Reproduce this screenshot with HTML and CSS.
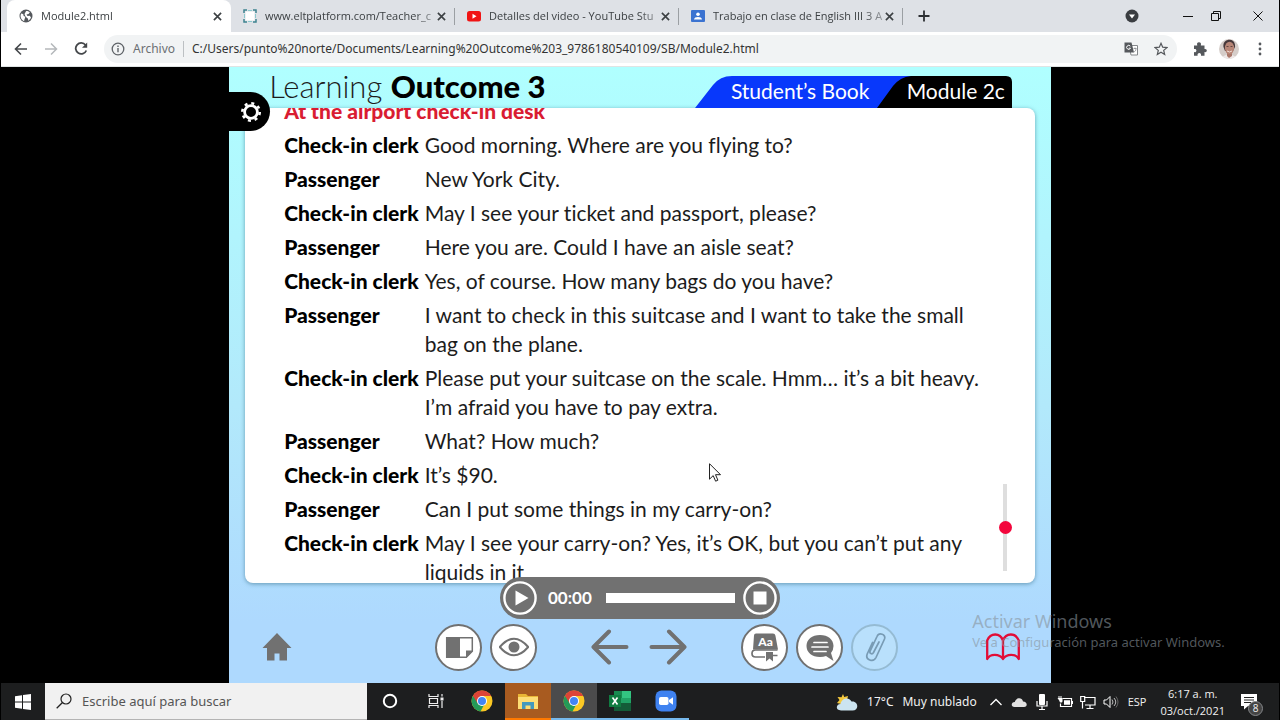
FILE: index.html
```html
<!DOCTYPE html>
<html lang="es">
<head>
<meta charset="utf-8">
<title>Module2.html</title>
<link rel="stylesheet" href="styles.css">
</head>
<body>
<svg class="defs" aria-hidden="true">
  <symbol id="close" viewBox="0 0 10 10"><path d="M1 1l8 8M9 1L1 9" stroke="#3c4043" stroke-width="1.8"/></symbol>
  <symbol id="chrome" viewBox="0 0 22 22">
    <circle cx="11" cy="11" r="10.5" fill="#fbc824"/>
    <path d="M11 11L1.9 5.8A10.5 10.5 0 0 0 9.5 21.4L14 13z" fill="#249a58"/>
    <path d="M11 11L6.8 13.4 1.9 5.8A10.5 10.5 0 0 1 20.2 6H11z" fill="#dc4437"/>
    <circle cx="11" cy="11" r="5" fill="#fff"/><circle cx="11" cy="11" r="4" fill="#4285f4"/>
  </symbol>
</svg>

<header class="tabstrip">
  <div class="tab tab-active">
    <svg class="favicon" viewBox="0 0 14 14"><circle cx="7" cy="7" r="6.5" fill="#54585c"/><path d="M2 4.5c2 0 3 1 2.500 2.500 1.500.2 2 1 1.500 2.300-.6.700-.5 1.700-.9 2.900C3 11.300 1.700 9.500 1.500 7zM7 2.200c1.200-.3 3 .3 3.800 1.300L9.500 5 7.500 5.500 8.500 7l2.300-.2L12 8.500C11.600 10 10 11.500 9 11.800c.5-1.500 0-2.300-1.200-3L6.500 7.500 5.500 5z" fill="#fff"/></svg>
    <span class="tab-title">Module2.html</span>
    <button class="close" aria-label="Cerrar"><svg><use href="#close"/></svg></button>
  </div>
  <div class="tab">
    <svg class="favicon" viewBox="0 0 14 14"><path d="M2.500 2.500h9v9h-9z" fill="#fff"/><path d="M1 4V1h3M10 1h3v3M13 10v3h-3M4 13H1v-3" fill="none" stroke="#3e8390" stroke-width="1.500"/><path d="M5 1.500h4M5 12.500h4M1.500 5v4M12.500 5v4" stroke="#8bc9ce"/></svg>
    <span class="tab-title">www.eltplatform.com/Teacher_c</span>
    <button class="close" aria-label="Cerrar"><svg><use href="#close"/></svg></button>
  </div>
  <div class="tab">
    <svg class="favicon" viewBox="0 0 14 14"><rect y="2" width="14" height="10.500" rx="2.500" fill="#f01414"/><path d="M5.500 4.700v5l4-2.500z" fill="#fff"/></svg>
    <span class="tab-title">Detalles del video - YouTube Stu</span>
    <button class="close" aria-label="Cerrar"><svg><use href="#close"/></svg></button>
  </div>
  <div class="tab">
    <svg class="favicon" viewBox="0 0 14 14"><rect y="1" width="14" height="12" rx="1" fill="#3b73d1"/><circle cx="7" cy="5.300" r="1.800" fill="#fff"/><path d="M3 10.500c0-3.300 8-3.300 8 0z" fill="#fff"/></svg>
    <span class="tab-title">Trabajo en clase de English III 3 A</span>
    <button class="close" aria-label="Cerrar"><svg><use href="#close"/></svg></button>
  </div>
  <button class="new-tab" aria-label="Nueva pestaña"><svg viewBox="0 0 12 12" width="12" height="12"><path d="M6 .5v11M.5 6h11" stroke="#2c2f32" stroke-width="1.800"/></svg></button>
  <div class="window-controls">
    <button aria-label="Buscar pestañas"><svg viewBox="0 0 14 14" width="14" height="14"><circle cx="7" cy="7" r="6.500" fill="#3a3d41"/><path d="M4 5.500h6L7 9.500z" fill="#fff"/></svg></button>
    <button class="minimize" aria-label="Minimizar"><svg viewBox="0 0 10 10" width="10" height="10"><path d="M0 5.500h10" stroke="#111"/></svg></button>
    <button aria-label="Restaurar"><svg viewBox="0 0 10 10" width="10" height="10"><path d="M.5 2.500h7v7h-7zM2.500 2.500v-2h7v7h-2" fill="none" stroke="#111"/></svg></button>
    <button aria-label="Cerrar ventana"><svg viewBox="0 0 10 10" width="10" height="10"><path d="M.5 .5l9 9M9.500 .5l-9 9" stroke="#111"/></svg></button>
  </div>
</header>

<nav class="toolbar">
  <button aria-label="Atrás"><svg viewBox="0 0 14 14" width="14" height="14"><path d="M13 7H1.500M7 1.500L1.500 7 7 12.500" fill="none" stroke="#44474a" stroke-width="1.600"/></svg></button>
  <button aria-label="Adelante"><svg viewBox="0 0 14 14" width="14" height="14"><path d="M1 7h11.500M7 1.500L12.500 7 7 12.500" fill="none" stroke="#b5b8bb" stroke-width="1.500"/></svg></button>
  <button aria-label="Recargar"><svg viewBox="0 0 14 14" width="14" height="14"><path d="M11.500 3A5.500 5.500 0 1 0 12.300 8.500" fill="none" stroke="#44474a" stroke-width="1.800"/><path d="M13.200 .5v5.300H8z" fill="#44474a"/></svg></button>
  <div class="omnibox">
    <svg viewBox="0 0 14 14" width="14" height="14"><circle cx="7" cy="7" r="5.800" fill="none" stroke="#5f6368" stroke-width="1.300"/><path d="M7 6v4.200M7 3.600v1.500" stroke="#5f6368" stroke-width="1.400"/></svg>
    <label for="url">Archivo</label>
    <input id="url" type="text" value="C:/Users/punto%20norte/Documents/Learning%20Outcome%203_9786180540109/SB/Module2.html">
    <button aria-label="Traducir"><svg viewBox="0 0 14 14" width="14" height="14"><path d="M5 3.500h8.500v9.500H7z" fill="#fff" stroke="#85888b"/><path d="M.5.5h7L10 10.500H.5z" fill="#55585c"/><path d="M6.300 4.200a2 2 0 1 0 .2 2H4.800" fill="none" stroke="#fff"/><path d="M9.500 6.500h3M11 5.500v1M12 6.500c0 2-1 3-2 3.500" fill="none" stroke="#85888b" stroke-width=".8"/></svg></button>
    <button aria-label="Marcador"><svg viewBox="0 0 14 14" width="14" height="14"><path d="M7 1.300l1.700 3.900 4.200.4-3.200 2.800 1 4.100L7 10.300l-3.700 2.200 1-4.100L1.100 5.600l4.200-.4z" fill="none" stroke="#55585c" stroke-width="1.200"/></svg></button>
  </div>
  <button class="extensions" aria-label="Extensiones"><svg viewBox="0 0 14 14" width="14" height="14"><path d="M1 3.500h3.300C3.500 1.500 4.500.3 6 .3s2.500 1.200 1.800 3.200h3.700V7c1.500-.4 2.300.5 2.300 1.500s-.8 2-2.300 1.600v3.600H8c.3-1.700-.5-2.700-1.700-2.700S4.300 12 4.600 13.700H1v-3.600c1.500.3 2.400-.5 2.400-1.700S2.500 6.600 1 7z" fill="#55585c"/></svg></button>
  <button class="avatar" aria-label="Perfil"><svg viewBox="0 0 20 20" width="20" height="20"><clipPath id="face"><circle cx="10" cy="10" r="10"/></clipPath><g clip-path="url(#face)"><path d="M0 0h20v20H0z" fill="#d5cdc9"/><path d="M3 20c0-6 14-6 14 0z" fill="#eee8e7"/><path d="M8 12h5v5l-3 2-2-2z" fill="#a97769"/><path d="M4.500 8C3-1 17-2 16 8l-2 4H6z" fill="#46383a"/><ellipse cx="10.500" cy="9" rx="4.600" ry="6.300" fill="#b78576"/><path d="M8 12q2.500 2 5 0" stroke="#f3ded6" fill="none"/><path d="M7.500 7.500h2M11.500 7.500h2" stroke="#634640"/></g></svg></button>
  <button class="menu" aria-label="Menú"><svg viewBox="0 0 4 14" width="4" height="14"><g fill="#55585c"><circle cx="2" cy="2" r="1.400"/><circle cx="2" cy="7" r="1.400"/><circle cx="2" cy="12" r="1.400"/></g></svg></button>
</nav>

<main class="viewport">
  <section class="book" lang="en">
    <header class="book-header">
      <h1>Learning <b>Outcome 3</b></h1>
      <div class="labels">
        <span class="label-book">Student’s Book</span>
        <span class="label-module">Module 2c</span>
        <svg viewBox="0 0 317 32" preserveAspectRatio="none"><path d="M170 32L190 0H311Q317 0 317 6V32z" fill="#000"/><path d="M0 32L18 9Q25 0 37 0H216Q205 1 198 10L182 32z" fill="#0838fb"/></svg>
      </div>
      <button class="settings" aria-label="Settings"><svg viewBox="0 0 22 22" width="22" height="22"><circle cx="11" cy="11" r="6.400" fill="none" stroke="#fff" stroke-width="2.800"/><circle cx="11" cy="11" r="8.700" fill="none" stroke="#fff" stroke-width="2.600" stroke-dasharray="3 3.833"/></svg></button>
    </header>

    <article class="card">
      <div class="dialogue">
        <h2>At the airport check-in desk</h2>
        <dl>
          <dt>Check-in clerk</dt><dd>Good morning. Where are you flying to?</dd>
          <dt>Passenger</dt><dd>New York City.</dd>
          <dt>Check-in clerk</dt><dd>May I see your ticket and passport, please?</dd>
          <dt>Passenger</dt><dd>Here you are. Could I have an aisle seat?</dd>
          <dt>Check-in clerk</dt><dd>Yes, of course. How many bags do you have?</dd>
          <dt>Passenger</dt><dd>I want to check in this suitcase and I want to take the small<br>bag on the plane.</dd>
          <dt>Check-in clerk</dt><dd>Please put your suitcase on the scale. Hmm… it’s a bit heavy.<br>I’m afraid you have to pay extra.</dd>
          <dt>Passenger</dt><dd>What? How much?</dd>
          <dt>Check-in clerk</dt><dd>It’s $90.</dd>
          <dt>Passenger</dt><dd>Can I put some things in my carry-on?</dd>
          <dt>Check-in clerk</dt><dd>May I see your carry-on? Yes, it’s OK, but you can’t put any<br>liquids in it.</dd>
        </dl>
      </div>
      <input class="text-scroll" type="range" min="0" max="100" value="50" aria-label="Scroll text">
    </article>

    <div class="player">
      <button aria-label="Play"><svg viewBox="0 0 34 34" width="34" height="34"><circle cx="17" cy="17" r="15.600" fill="none" stroke="#fff" stroke-width="2.400"/><path d="M12.500 9.500v15L25.500 17z" fill="#fff"/></svg></button>
      <time>00:00</time>
      <progress value="0" max="1" aria-label="Audio"></progress>
      <button aria-label="Stop"><svg viewBox="0 0 34 34" width="34" height="34"><circle cx="17" cy="17" r="15.600" fill="none" stroke="#fff" stroke-width="2.400"/><path d="M10.500 10.500h13v13h-13z" fill="#fff"/></svg></button>
    </div>

    <footer class="tools">
      <button class="home" aria-label="Home"><svg viewBox="0 0 30 28" width="30" height="28"><path d="M15 0l14.500 15H25v12.500h-7.500v-7h-5v7H5V15H.5z" fill="#717171"/></svg></button>
      <div class="group">
        <button class="round" aria-label="Cover"><svg viewBox="0 0 30 30" width="30" height="30"><path d="M2 5h14v21H2z" fill="#717171"/><path d="M2.700 5.700h25.600v13.500l-6 6H2.700z" fill="none" stroke="#717171" stroke-width="1.500"/><path d="M22 26v-7.500h7z" fill="#717171"/></svg></button>
        <button class="round" aria-label="Show"><svg viewBox="0 0 30 30" width="30" height="30"><path d="M.8 15Q15-1.500 29.200 15 15 31.500.8 15z" fill="none" stroke="#717171" stroke-width="2"/><circle cx="15" cy="15" r="5.500" fill="#717171"/></svg></button>
      </div>
      <div class="group arrows">
        <button aria-label="Previous"><svg viewBox="0 0 38 36" width="38" height="36"><path d="M35.500 18H3M18 2.500L2.500 18 18 33.500" fill="none" stroke="#717171" stroke-width="4" stroke-linecap="round" stroke-linejoin="round"/></svg></button>
        <button aria-label="Next"><svg viewBox="0 0 38 36" width="38" height="36"><path d="M2.500 18H35M20 2.500L35.500 18 20 33.500" fill="none" stroke="#717171" stroke-width="4" stroke-linecap="round" stroke-linejoin="round"/></svg></button>
      </div>
      <div class="group">
        <button class="round" aria-label="Dictionary"><svg viewBox="0 0 30 30" width="30" height="30"><path d="M6 1.500h17q2 0 2.400 2l2.600 14H3l1-14Q4 1.500 6 1.500z" fill="#717171"/><path d="M27.500 18H5.500q-3.500 0-3.500 3.500T5.500 25H15M21 23.500h6.500" fill="none" stroke="#717171" stroke-width="1.700"/><path d="M16 20h7v9.500l-3.500-3-3.500 3z" fill="#717171"/><text class="dictionary-text" x="15.500" y="14" text-anchor="middle">Aa</text></svg></button>
        <button class="round" aria-label="Comments"><svg viewBox="0 0 30 30" width="30" height="30"><path d="M15 3C7 3 1.500 7.500 1.500 14S7 25 15 25q3.500 0 6-1l7.500 5-2.500-8q2.500-3 2.500-7C28.500 7.500 23 3 15 3z" fill="#717171"/><path d="M9 10.500h13M7 15h16M9 19.500h12" stroke="#fff" stroke-width="1.700" stroke-linecap="round"/></svg></button>
        <button class="round" aria-label="Attachments" disabled><svg viewBox="0 0 30 30" width="30" height="30"><path d="M19 10L13.500 20.500c-1.400 2.500-4.500.9-3.300-1.600L17 4.500C19-.2 26.300 2.300 24.500 7L16 25.500c-2.700 5.500-11 2.300-8.800-3.500L12.500 10.500" fill="none" stroke="#789bb4" stroke-width="1.700" stroke-linecap="round"/></svg></button>
      </div>
      <button class="contents" aria-label="Contents"><svg viewBox="0 0 34 28" width="34" height="28"><path d="M17 26V7.500C14-.5 4.500-.5 1.200 7.500V26C4 20.500 13.500 20.500 17 26zM17 26V7.500c3-8 12.500-8 15.800 0V26C30 20.500 20.500 20.500 17 26z" fill="none" stroke="#e20d37" stroke-width="2.300" stroke-linejoin="round"/></svg></button>
    </footer>
  </section>
  <aside class="activation"><strong>Activar Windows</strong><span>Ve a Configuración para activar Windows.</span></aside>
  <svg class="cursor" viewBox="0 0 12 19" width="12" height="19"><path d="M.5.700v15.500l3.700-3.600 2.400 5.600 2.300-1-2.400-5.500h5z" fill="#fff" stroke="#222"/></svg>
</main>

<footer class="taskbar">
  <button class="start" aria-label="Inicio"><svg viewBox="0 0 16 16" width="16" height="16"><path d="M0 2.300l7-1v6.200H0zM8 1.100L16 0v7.500H8zM0 8.500h7v6.300l-7-1zM8 8.500h8V16l-8-1.100z" fill="#fff"/></svg></button>
  <div class="search">
    <svg viewBox="0 0 16 16" width="16" height="16"><circle cx="10" cy="6" r="5" fill="none" stroke="#222" stroke-width="1.200"/><path d="M6.500 9.500L.7 15.300" stroke="#222" stroke-width="1.300"/></svg>
    <input type="text" placeholder="Escribe aquí para buscar" aria-label="Buscar">
  </div>
  <div class="apps">
    <button aria-label="Cortana"><svg viewBox="0 0 16 16" width="16" height="16"><circle cx="8" cy="8" r="6.200" fill="none" stroke="#fff" stroke-width="2"/></svg></button>
    <button aria-label="Vista de tareas"><svg viewBox="0 0 16 16" width="16" height="16"><path d="M1 1v2.500h9V1M1.500 5.500h8v5h-8zM1 15v-2.500h9V15M14 1v2.500M14 8v7" fill="none" stroke="#eee" stroke-width="1.200"/><path d="M12.500 4.500h3v3h-3z" fill="#eee"/></svg></button>
    <button class="launcher" aria-label="Chrome"><svg width="22" height="22"><use href="#chrome"/></svg></button>
    <button class="app-alert" aria-label="Explorador"><svg viewBox="0 0 22 18" width="22" height="18"><path d="M1 2h8l2 2h10v13H1z" fill="#e9b635"/><path d="M1 5h20v12H1z" fill="#fddd75"/><path d="M5 17v-7h12v7h-3.500v-3.500h-5V17z" fill="#4499bd"/></svg></button>
    <button class="app-current" aria-label="Chrome activo"><svg width="22" height="22"><use href="#chrome"/></svg></button>
    <button class="app-open" aria-label="Excel"><svg viewBox="0 0 22 22" width="22" height="22"><path d="M5 1h17v20H5z" fill="#21a366"/><path d="M5 1h8v7H5z" fill="#188a50"/><path d="M13 1h9v7h-9z" fill="#33c481"/><path d="M5 13h17v8H5z" fill="#145c38"/><path d="M0 5h12v12H0z" fill="#107c41"/><path d="M3.500 7.500l5 7M8.500 7.500l-5 7" stroke="#fff" stroke-width="1.600"/></svg></button>
    <button class="app-open" aria-label="Zoom"><svg viewBox="0 0 22 22" width="22" height="22"><rect x=".5" y=".5" width="21" height="21" rx="6" fill="#3f82f0"/><rect x="4" y="7" width="9.500" height="8" rx="1.800" fill="#fff"/><path d="M14 10l4-2.700v7.400L14 12z" fill="#fff"/></svg></button>
  </div>
  <div class="tray">
    <button class="weather"><svg viewBox="0 0 22 18" width="22" height="18"><path d="M7 1l1.200 3L12 3l-1 4-6 4-4-1 2.500-3L1.500 4l4 .2z" fill="#f5c93e"/><path d="M5 17.500c-6 0-5-6.500-.5-6.500C5.500 5 13 3.500 15.500 8.500c7-1 8 9 1 9z" fill="#cce4f0"/></svg><span>17°C</span><span>Muy nublado</span></button>
    <div class="status">
      <svg viewBox="0 0 16 16"><path d="M2.500 11L8 5.500l5.500 5.500" fill="none" stroke="#fff" stroke-width="1.300"/></svg>
      <svg viewBox="0 0 16 16"><path d="M3.500 13C-.5 13 0 8 3.800 8 5 3.500 11 3 12 7.500c4.500 0 5 5.500 1 5.500z" fill="#e1e1e1"/></svg>
      <svg viewBox="0 0 16 16"><rect x="5" width="6" height="11" rx="1" fill="#fff"/><path d="M3 7v5h10V7M8 12v4M5 15.500h6" fill="none" stroke="#fff" stroke-width="1.200"/></svg>
      <svg viewBox="0 0 16 16"><path d="M5.500 4.500h9v8H3.500v-3" fill="none" stroke="#fff" stroke-width="1.200"/><path d="M7 6.300h6v4.400H7zM14.500 7H16v3h-1.500zM.5 4h5v3c0 2-3 2-3 0z" fill="#fff"/><path d="M2 2v2M4 2v2" stroke="#fff"/></svg>
      <svg viewBox="0 0 16 16"><path d="M4 3.500h11v7.500H5M10 11v3.500M6.500 14.500h7M.7 2.500h4v5h-4zM2.500 7.500v7" fill="none" stroke="#fff" stroke-width="1.200"/></svg>
      <svg viewBox="0 0 16 16"><path d="M1 6h2.500L7 2.500v11L3.500 10H1z" fill="none" stroke="#fff"/><path d="M9 5.500q2 2.500 0 5M11 4q3.500 4 0 8" fill="none" stroke="#bbb"/><path d="M13 2.500q4 5.500 0 11" fill="none" stroke="#666"/></svg>
    </div>
    <span class="language">ESP</span>
    <time class="clock">6:17 a. m.<br>03/oct./2021</time>
    <button class="notifications" aria-label="Notificaciones"><svg viewBox="0 0 16 16" width="16" height="16"><path d="M0 0h16v12H7l-4 3.500V12H0z" fill="#fff"/><path d="M3 3.500h10M3 6h10M3 8.500h7" stroke="#222"/></svg><span>8</span></button>
  </div>
</footer>
</body>
</html>
```
FILE: styles.css
```css
* { box-sizing: border-box; }
body {
  margin: 0;
  height: 100vh;
  display: flex;
  flex-direction: column;
  overflow: hidden;
  padding: 0 1px;
  background: #000;
  font: 12px/16px "Open Sans", "Noto Sans", sans-serif;
  color: #3c4043;
}
button { padding: 0; border: 0; background: none; color: inherit; font: inherit; display: flex; align-items: center; justify-content: center; flex: none; }
svg { display: block; flex: none; }
input { font: inherit; color: inherit; border: 0; padding: 0; background: none; min-width: 0; outline: 0; }
.defs { position: absolute; width: 0; height: 0; }

/* Browser window */
.tabstrip { display: flex; height: 32px; flex: none; background: #dee1e6; padding-left: 6px; }
.tab { display: flex; align-items: center; width: 224px; flex: 0 1 224px; min-width: 0; padding: 0 9px 0 12px; position: relative; }
.tab:not(.tab-active)::after { content: ""; position: absolute; right: 0; top: 8px; width: 1px; height: 17px; background: #9b9fa3; }
.tab-active { background: #fff; border-radius: 8px 8px 0 0; }
.favicon { width: 14px; height: 14px; }
.tab-title { flex: 1; margin: 0 1px 0 8px; overflow: hidden; white-space: nowrap; font-size: 11px; mask-image: linear-gradient(to right, #000 88%, #0006); }
.close { width: 10px; height: 10px; }
.close svg { width: 9px; height: 9px; }
.new-tab { width: 42px; }
.window-controls { margin-left: auto; display: flex; align-items: center; padding-right: 16px; gap: 18px; }
.minimize { margin-left: 26px; }
.window-controls button:last-child { margin-left: 14px; }

.toolbar { display: flex; align-items: center; height: 35px; flex: none; background: #fff; padding: 0 17px 0 13px; gap: 16px; border-bottom: 1px solid #dfe4e4; }
.omnibox { flex: 1; min-width: 0; display: flex; align-items: center; height: 28px; border-radius: 14px; background: #f1f3f4; padding: 0 9px 0 7px; font-family: "Noto Sans", sans-serif; }
.omnibox label { color: #6b6f73; margin-left: 8px; padding-right: 8px; border-right: 1px solid #bcc0c3; }
.omnibox input { flex: 1; margin-left: 8px; color: #333; }
.omnibox button { margin-left: 16px; }
.avatar { margin-left: -4px; }
.menu { margin-left: 3px; }

/* Course page */
.viewport { flex: 1; min-height: 0; display: flex; justify-content: center; position: relative; background: #000; }
.book { width: 64.3%; display: flex; flex-direction: column; position: relative; background: linear-gradient(#b0ffff, #b2e9fb 55%, #aed9fe 90%); font-family: Lato, sans-serif; font-variant-ligatures: none; color: #1c1c1c; }
.book-header { display: flex; justify-content: space-between; align-items: flex-end; height: 41px; padding: 0 39px 0 40px; flex: none; position: relative; z-index: 1; }
h1 { margin: 0; font-size: 31px; line-height: 44px; font-weight: 300; white-space: nowrap; }
h1 b { font-weight: 900; color: #000; }
.labels { position: relative; width: 317px; height: 32px; display: flex; justify-content: space-between; align-items: center; padding: 0 7px 2px 36px; color: #fff; font-size: 21px; white-space: nowrap; }
.labels svg { position: absolute; inset: 0; width: 100%; height: 100%; }
.labels span { z-index: 1; }
.settings { position: absolute; left: 0; top: 25px; width: 41px; height: 39px; background: #000; border-radius: 0 20px 20px 0; padding-left: 3px; }
.card { flex: 1; min-height: 0; display: flex; justify-content: space-between; margin: 0 16px; padding: 0 23px 0 39px; overflow: hidden; background: #fff; border-radius: 8px; box-shadow: 0 1px 4px #3f7790aa; }
.dialogue { margin-top: -12px; flex: 1; }
h2 { margin: 0 0 5px; font-size: 21px; line-height: 29px; font-weight: 900; color: #d91c32; }
dl { margin: 0; display: grid; grid-template-columns: auto 1fr; column-gap: 6px; row-gap: 5px; font-size: 21px; line-height: 29px; }
dt { font-weight: 900; color: #000; white-space: nowrap; }
dd { margin: 0; white-space: nowrap; }
.text-scroll { appearance: none; writing-mode: vertical-lr; align-self: flex-end; width: 14px; height: 87px; margin: 0 0 12px; }
.text-scroll::-webkit-slider-runnable-track { width: 4px; height: 100%; background: #dedede; }
.text-scroll::-webkit-slider-thumb { appearance: none; width: 13px; height: 13px; margin-left: -4px; border-radius: 50%; background: #f3063c; }
.player { align-self: center; z-index: 1; width: 280px; height: 42px; margin-top: -6px; padding: 0 3px; display: flex; align-items: center; flex: none; background: #717171; border-radius: 21px; color: #fff; font-size: 17px; font-weight: 700; }
.player time { margin: 0 14px 0 11px; }
.player progress { appearance: none; flex: 1; min-width: 0; height: 10px; margin-right: 8px; border: 0; }
.player progress::-webkit-progress-bar { background: #fff; }
.tools { display: grid; grid-template-columns: 17fr auto auto auto 11fr; column-gap: 54px; align-items: center; height: 64px; padding-bottom: 8px; flex: none; }
.group { display: flex; gap: 8px; }
.arrows { gap: 20px; }
.home { justify-self: start; margin-left: 33px; }
.contents { justify-self: end; margin-right: 31px; }
.round { width: 47px; height: 47px; border: 2px solid #717171; border-radius: 50%; background: #fff; }
.round:disabled { border-color: #95bbd3; background: #b9e0fc; }
.dictionary-text { font: 900 12px Lato, sans-serif; fill: #fff; }
.activation { position: absolute; left: 76%; top: 542px; display: flex; flex-direction: column; color: #88939b99; font: 13px/18px "Noto Sans", sans-serif; white-space: nowrap; }
.activation strong { font-size: 18px; line-height: 24px; font-weight: 400; }
.cursor { position: absolute; left: 708px; top: 396px; }

/* Windows taskbar */
.taskbar { display: flex; align-items: stretch; height: 37px; flex: none; background: #1d1e1f; color: #f1f1f1; }
.start { width: 44px; }
.search { width: 322px; flex: 0 1 322px; display: flex; align-items: center; gap: 10px; padding: 0 11px; background: #f1f1f1; color: #333; font: 13px/18px "Noto Sans", sans-serif; border-bottom: 1px solid #b4b4b4; }
.search input { flex: 1; }
.search input::placeholder { color: #555; opacity: 1; }
.apps { display: flex; }
.apps button { width: 46px; border-bottom: 2px solid transparent; }
.apps .app-alert { background: #a85b20; border-color: #ff7900; }
.apps .app-current { background: #4b4b4c; border-color: #76b9ed; }
.apps .app-open { border-color: #76b9ed; }
.tray { margin-left: auto; display: flex; align-items: center; }
.weather { gap: 9px; font: 12px/16px "Noto Sans", sans-serif; margin-right: 11px; }
.status { display: flex; gap: 7px; }
.status svg { width: 16px; height: 16px; }
.language { margin: 0 14px 0 9px; font-size: 11px; }
.clock { text-align: center; font-size: 11px; line-height: 17px; }
.notifications { position: relative; margin: 0 22px 0 16px; }
.notifications span { position: absolute; left: 7px; top: 7px; width: 15px; height: 15px; border: 1px solid #85878a; border-radius: 50%; background: #444; font-size: 10px; line-height: 13px; text-align: center; }
```
